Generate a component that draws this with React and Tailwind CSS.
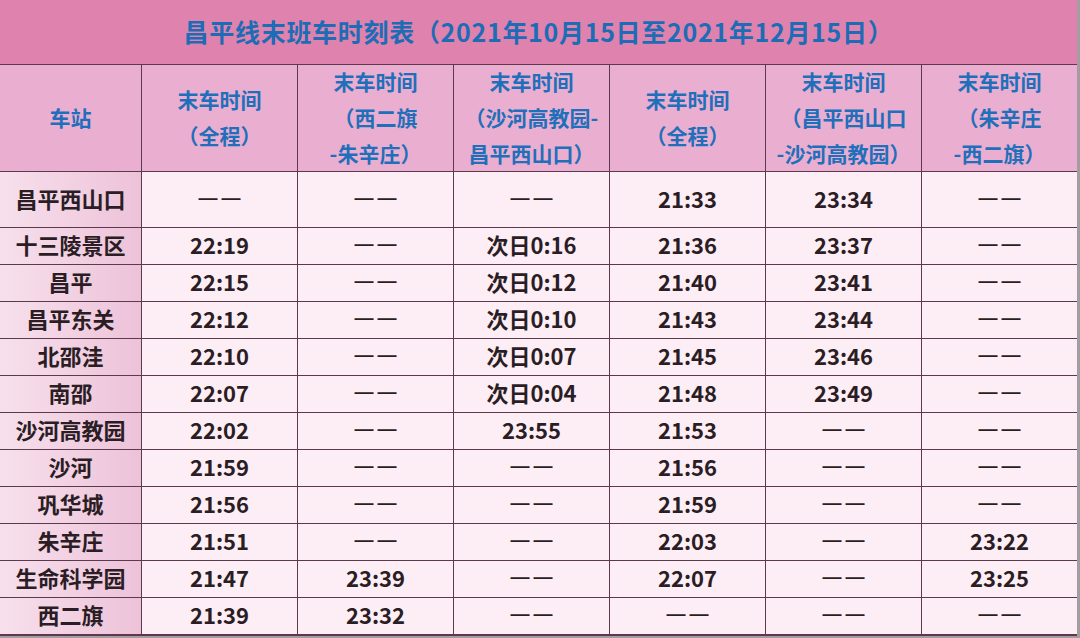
const FONT = { fontFamily: '"Noto Sans CJK SC", "Noto Sans", sans-serif' };

const HEADERS = [
  ["车站"],
  ["末车时间", "（全程）"],
  ["末车时间", "（西二旗", "-朱辛庄）"],
  ["末车时间", "（沙河高教园-", "昌平西山口）"],
  ["末车时间", "（全程）"],
  ["末车时间", "（昌平西山口", "-沙河高教园）"],
  ["末车时间", "（朱辛庄", "-西二旗）"],
];

const D = "——";

const ROWS = [
  ["昌平西山口", D, D, D, "21:33", "23:34", D],
  ["十三陵景区", "22:19", D, "次日0:16", "21:36", "23:37", D],
  ["昌平", "22:15", D, "次日0:12", "21:40", "23:41", D],
  ["昌平东关", "22:12", D, "次日0:10", "21:43", "23:44", D],
  ["北邵洼", "22:10", D, "次日0:07", "21:45", "23:46", D],
  ["南邵", "22:07", D, "次日0:04", "21:48", "23:49", D],
  ["沙河高教园", "22:02", D, "23:55", "21:53", D, D],
  ["沙河", "21:59", D, D, "21:56", D, D],
  ["巩华城", "21:56", D, D, "21:59", D, D],
  ["朱辛庄", "21:51", D, D, "22:03", D, "23:22"],
  ["生命科学园", "21:47", "23:39", D, "22:07", D, "23:25"],
  ["西二旗", "21:39", "23:32", D, D, D, D],
];

// two separate dashes with a small gap, as in the printed table
function Dash() {
  return (
    <span className="flex gap-[4px] text-[19px] font-['Liberation_Sans',sans-serif]">
      <span>—</span>
      <span>—</span>
    </span>
  );
}

export default function App() {
  return (
    <div className="w-[1080px] h-[638px] bg-[#a59ca3] overflow-hidden" style={FONT}>
      <div className="w-[1077px] h-[636px] bg-[#5b3a4e] flex flex-col gap-px">
        <div className="h-[64px] bg-[#df82ad] flex items-center justify-center text-[25px] font-bold text-[#1c6cb6] tracking-[0.7px]">
          昌平线末班车时刻表（2021年10月15日至2021年12月15日）
        </div>
        <div className="grid grid-cols-[141px_repeat(6,155px)] grid-rows-[106px_55px_repeat(11,36px)] gap-px">
          {HEADERS.map((lines, i) => (
            <div
              key={i}
              className="bg-[#eaaed0] flex flex-col items-center justify-center pb-[2px] text-[21px] font-bold leading-[36px] text-[#1f6fba]"
            >
              {lines.map((l, j) => (
                <span key={j}>{l}</span>
              ))}
            </div>
          ))}
          {ROWS.map((row) =>
            row.map((cell, j) => (
              <div
                key={row[0] + j}
                className={
                  j === 0
                    ? "bg-gradient-to-r from-[#f7e0ec] to-[#edc2d9] flex items-center justify-center pb-[3px] text-[22px] font-bold text-[#2a1d24]"
                    : "bg-[#fdedf5] flex items-center justify-center pb-[3px] text-[22px] font-bold text-[#2a1d24]"
                }
              >
                {cell === D ? <Dash /> : cell}
              </div>
            ))
          )}
        </div>
      </div>
    </div>
  );
}
